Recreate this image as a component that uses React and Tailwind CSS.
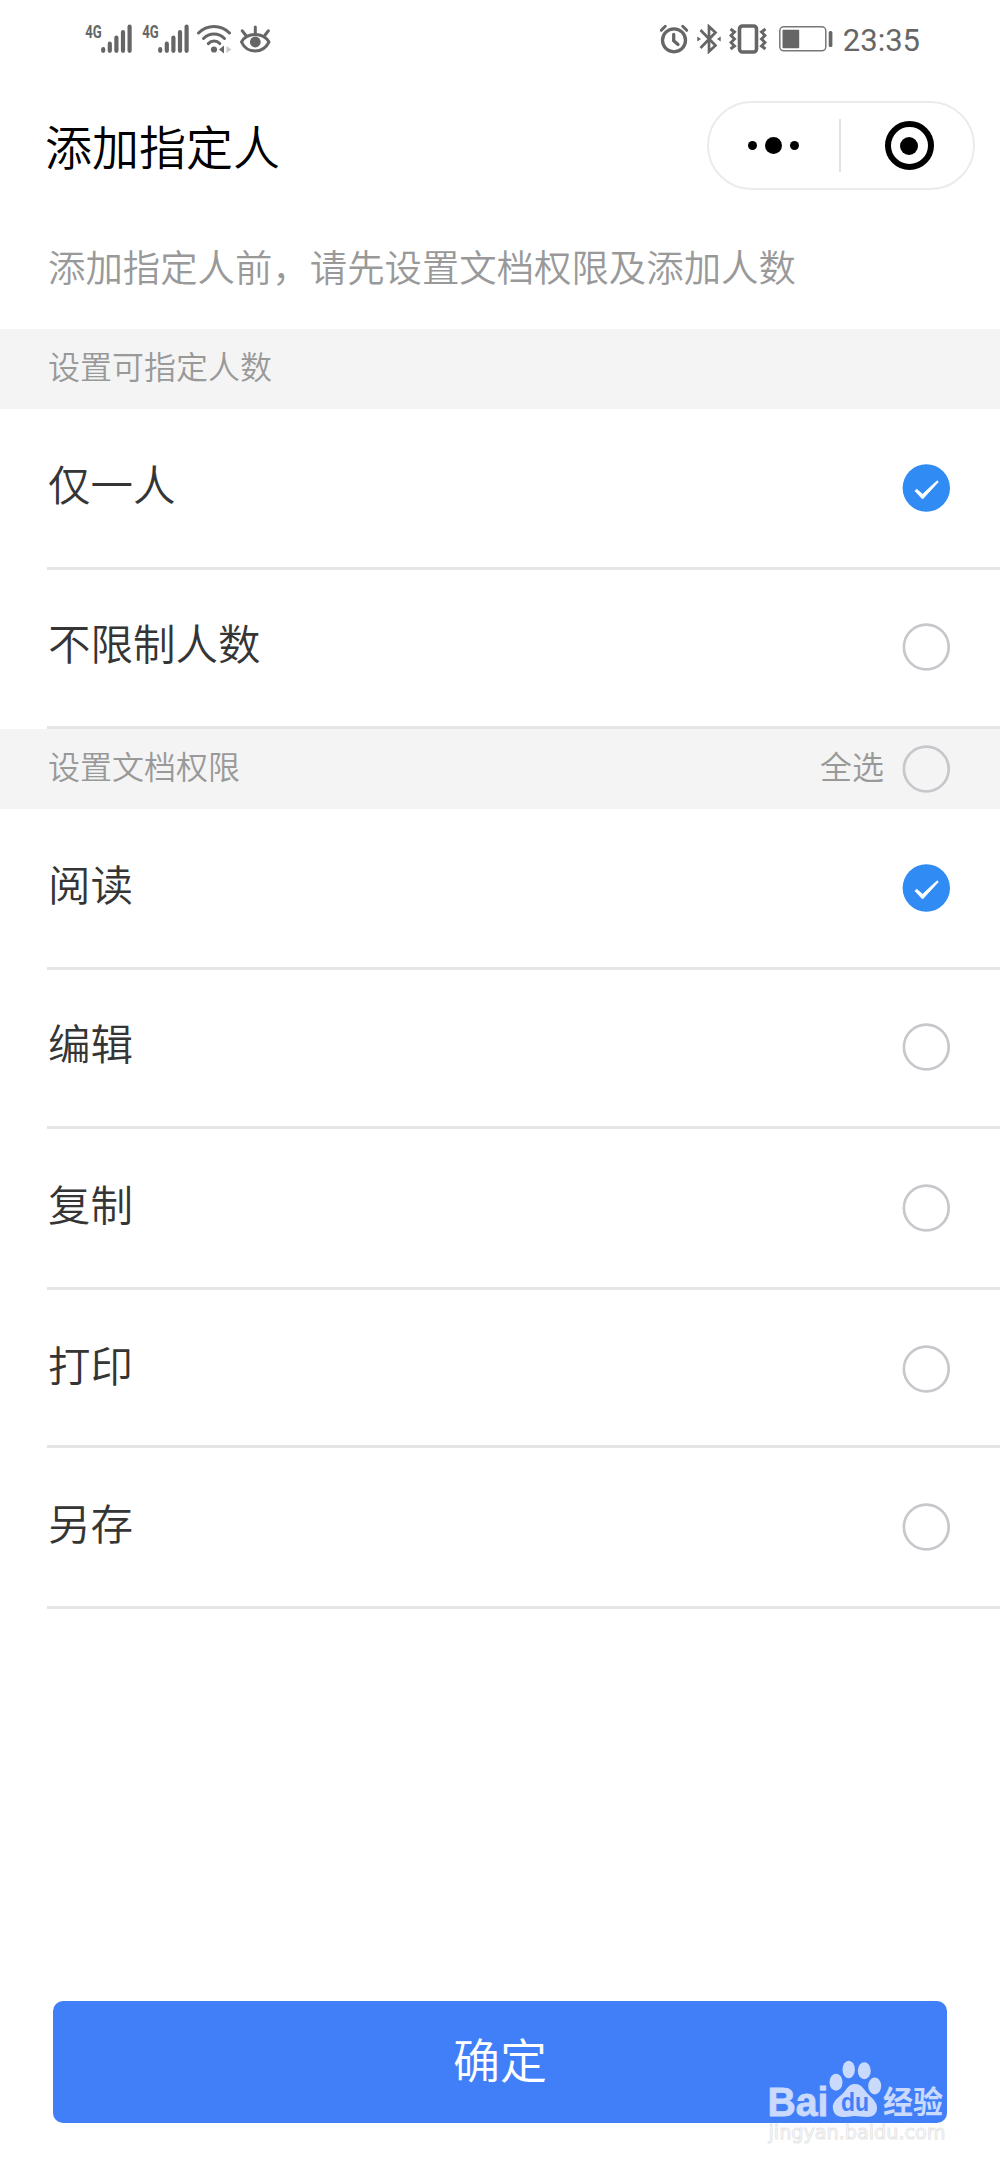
import React, { useState } from 'react';

const PEOPLE = [
  { id: 'one', label: '仅一人', size: 'h-[161px]' },
  { id: 'unlimited', label: '不限制人数', size: 'h-[159px] pb-[2px]' },
];

const PERMISSIONS = [
  { id: 'read', label: '阅读', size: 'h-[161px]' },
  { id: 'edit', label: '编辑', size: 'h-[159px] pb-[2px]' },
  { id: 'copy', label: '复制', size: 'h-[161px]' },
  { id: 'print', label: '打印', size: 'h-[158px] pt-[3px]' },
  { id: 'save', label: '另存', size: 'h-[161px]' },
];

const Signal = () => (
  <svg width="49" height="30" viewBox="0 0 49 30" fill="#666" stroke="#666" className="overflow-visible">
    <text
      x="0.3"
      y="13.6"
      fontSize="18"
      fontWeight="700"
      stroke="none"
      textLength="16.5"
      lengthAdjust="spacingAndGlyphs"
      fontFamily="Roboto, sans-serif"
    >
      4G
    </text>
    <path
      d="M18.2 25.200v1.600M24.800 19.700v7.100M31.400 13.700v13.100M38 8v18.800M44.600 2.500v24.300"
      strokeWidth="4.2"
      strokeLinecap="round"
    />
  </svg>
);

const WifiIcon = () => (
  <svg width="36" height="30" viewBox="0 0 36 30" fill="none" stroke="#666" strokeWidth="3" strokeLinecap="round">
    <path d="M1.500 9C10 .200 24 .200 32.500 9" />
    <path d="M6.500 14.500C12.500 8.500 21.500 8.500 27.500 14.500" />
    <path d="M11.300 19.600C14.500 16.200 19.700 16.200 22.800 19.600" />
    <circle cx="17" cy="25.500" r="3.100" fill="#666" stroke="none" />
    <path d="M27 21.500v8l-5-4z" fill="#666" stroke="none" />
    <path d="M29.500 22v7l5-3.500z" fill="#ccc" stroke="none" />
  </svg>
);

const EyeIcon = () => (
  <svg width="32" height="30" viewBox="0 0 32 30" fill="none" stroke="#666" strokeWidth="3" strokeLinecap="round">
    <path d="M2.500 18C8 8 24 8 30 18C24 30 8 30 2.500 18z" strokeLinejoin="round" />
    <circle cx="16.300" cy="18" r="5.400" fill="#666" stroke="none" />
    <path d="M16.300 3v6M3.300 6.800l3.200 4.200M29.300 6.800l-3.200 4.200" />
  </svg>
);

const AlarmIcon = () => (
  <svg width="30" height="30" viewBox="0 0 30 30" fill="none" stroke="#666" strokeWidth="3.3" strokeLinecap="round">
    <circle cx="15" cy="16.300" r="11.500" />
    <path d="M14.700 10.500v6.300l4.300 3.700" />
    <path d="M2.300 6.300l4-4M27.700 6.300l-4-4" strokeWidth="3" />
  </svg>
);

const BluetoothIcon = () => (
  <svg width="24" height="30" viewBox="0 0 24 30" fill="none" stroke="#666" strokeWidth="2.700">
    <path d="M3.500 6l15 15.500-6.500 6V2.500l6.500 6-15 15.500" />
    <path d="M.300 12.500l3.700 2.500-3.700 2.500zM23.700 12.500l-3.700 2.500 3.700 2.500z" fill="#666" stroke="none" />
  </svg>
);

const VibrateIcon = () => (
  <svg width="38" height="30" viewBox="0 0 38 30" fill="none" stroke="#666">
    <rect x="10.500" y="2" width="17" height="26" rx="3" strokeWidth="3.600" />
    <path d="M1.500 5l4 3-3.500 3.500 3.500 3.500-3.500 3.500 3.500 3.500-4 3" strokeWidth="2.900" />
    <path d="M36.500 5l-4 3 3.500 3.500-3.500 3.500 3.500 3.500-3.500 3.500 4 3" strokeWidth="2.900" />
  </svg>
);

const BatteryIcon = () => (
  <svg width="54" height="26" viewBox="0 0 54 26" fill="none">
    <rect x=".8" y=".8" width="46" height="24" rx="4" stroke="#777" strokeWidth="1.500" />
    <rect x="3.500" y="3.700" width="16.700" height="18.500" rx="1" fill="#666" />
    <rect x="49.700" y="5" width="3.700" height="16" rx="1.500" fill="#666" />
  </svg>
);

const StatusBar = () => (
  <div className="flex h-[78px] items-center justify-between pl-[85px] pr-[80px]">
    <div className="flex items-center">
      <Signal />
      <div className="ml-2">
        <Signal />
      </div>
      <div className="ml-1.5 flex gap-1.5">
        <WifiIcon />
        <EyeIcon />
      </div>
    </div>
    <div className="flex items-center">
      <AlarmIcon />
      <div className="ml-2">
        <BluetoothIcon />
      </div>
      <div className="ml-2">
        <VibrateIcon />
      </div>
      <div className="ml-3">
        <BatteryIcon />
      </div>
      <span className="ml-2.5 pt-0.5 font-[Roboto] text-[31px] font-normal leading-none text-[#666]">23:35</span>
    </div>
  </div>
);

const Capsule = () => (
  <div className="flex h-[89px] w-[268px] items-center rounded-full border-2 border-[#ebebeb]">
    <div className="flex flex-1 items-center justify-center gap-2 pr-0.5">
      <span className="size-[9px] rounded-full bg-black" />
      <span className="size-[17px] rounded-full bg-black" />
      <span className="size-[9px] rounded-full bg-black" />
    </div>
    <div className="h-[53px] w-0.5 bg-[#e2e2e2]" />
    <div className="flex flex-1 justify-center pl-1">
      <div className="flex size-[49px] items-center justify-center rounded-full border-[6px] border-black">
        <span className="size-[18px] rounded-full bg-black" />
      </div>
    </div>
  </div>
);

const Radio = ({ checked, onClick }) => (
  <button type="button" onClick={onClick} className="size-[48px] shrink-0">
    <svg width="48" height="48" viewBox="0 0 48 48" fill="none">
      {checked ? (
        <>
          <circle cx="24.300" cy="24" r="23.700" fill="#318bf5" />
          <path
            d="M12.900 26.900L14.600 25.200L20.600 30.300L35.200 16.800L36.300 17.900L20.600 35z"
            fill="#fff"
            stroke="#fff"
            strokeWidth="0.8"
            strokeLinejoin="round"
          />
        </>
      ) : (
        <circle cx="24.300" cy="24" r="22.400" stroke="#c8c7cc" strokeWidth="2.700" />
      )}
    </svg>
  </button>
);

const Row = ({ item, checked, onClick }) => (
  <div
    className={`ml-[47px] flex items-center justify-between border-b-[3px] border-[#e5e5e5] pl-px pr-[50px] ${item.size}`}
  >
    <span className="pb-[10px] text-[42.500px] leading-none text-[#353535]">{item.label}</span>
    <Radio checked={checked} onClick={onClick} />
  </div>
);

const SectionHeader = ({ title, children }) => (
  <div className="flex h-[80px] items-center justify-between bg-[#f4f4f4] pl-[48px] pr-[50px] text-[32px] leading-none text-[#999]">
    <span className="pb-[9px]">{title}</span>
    {children}
  </div>
);

const Watermark = () => (
  <div className="absolute left-[766px] top-[2058px]">
    <svg width="190" height="90" viewBox="0 0 190 90" className="overflow-visible">
      <g fill="#c9dafd">
        <text
          x="1.5"
          y="57.500"
          fontSize="40"
          fontWeight="700"
          stroke="#c9dafd"
          strokeWidth="0.8"
          textLength="61"
          lengthAdjust="spacingAndGlyphs"
          fontFamily="Liberation Sans, sans-serif"
        >
          Bai
        </text>
        <ellipse cx="70" cy="24.300" rx="6.500" ry="8.500" />
        <ellipse cx="82.700" cy="11.500" rx="6.200" ry="8.800" />
        <ellipse cx="98.300" cy="12.700" rx="6.500" ry="8.500" />
        <ellipse cx="108.700" cy="28" rx="6.500" ry="8.500" />
        <path d="M89 26c-8 0-9 8-15 12-5 4-8 8-7 13 1 6 5 8 11 8 5 0 7-1 11-1s7 1 12 1c6 0 10-3 10-9 0-5-3-8-7-12-6-5-7-12-15-12z" />
        <text
          x="117"
          y="55"
          fontSize="31"
          fontWeight="700"
          textLength="60"
          lengthAdjust="spacingAndGlyphs"
          fontFamily="Noto Sans CJK SC, sans-serif"
        >
          经验
        </text>
      </g>
      <text
        x="75"
        y="53"
        fontSize="26"
        fontWeight="700"
        fill="#417ff9"
        textLength="28"
        lengthAdjust="spacingAndGlyphs"
        fontFamily="Liberation Sans, sans-serif"
      >
        du
      </text>
      <text
        x="2.5"
        y="81"
        fontSize="20"
        fontWeight="400"
        fill="#fff"
        stroke="#e6e6e6"
        strokeWidth="1"
        textLength="177"
        lengthAdjust="spacingAndGlyphs"
        fontFamily="DejaVu Sans, sans-serif"
      >
        jingyan.baidu.com
      </text>
    </svg>
  </div>
);

const App = () => {
  const [people, setPeople] = useState('one');
  const [permissions, setPermissions] = useState(['read']);

  const allSelected = permissions.length === PERMISSIONS.length;

  const togglePermission = (id) => {
    setPermissions((prev) => (prev.includes(id) ? prev.filter((p) => p !== id) : [...prev, id]));
  };

  const toggleAll = () => {
    setPermissions(allSelected ? [] : PERMISSIONS.map((p) => p.id));
  };

  return (
    <div className="relative flex h-[2167px] w-[1000px] flex-col bg-white font-['Noto_Sans_CJK_SC',sans-serif] font-[350]">
      <StatusBar />

      <header className="flex h-[134px] items-center justify-between pl-[45px] pr-[25px] pt-px">
        <h1 className="pb-[3px] text-[47px] font-[350] leading-none text-black">添加指定人</h1>
        <Capsule />
      </header>

      <p className="h-[117px] pl-[48px] pt-[36px] text-[37.400px] leading-none text-[#999]">
        添加指定人前，请先设置文档权限及添加人数
      </p>

      <SectionHeader title="设置可指定人数" />
      {PEOPLE.map((item) => (
        <Row key={item.id} item={item} checked={people === item.id} onClick={() => setPeople(item.id)} />
      ))}

      <SectionHeader title="设置文档权限">
        <div className="flex items-center gap-[18px]">
          <span className="pb-[9px]">全选</span>
          <Radio checked={allSelected} onClick={toggleAll} />
        </div>
      </SectionHeader>
      {PERMISSIONS.map((item) => (
        <Row
          key={item.id}
          item={item}
          checked={permissions.includes(item.id)}
          onClick={() => togglePermission(item.id)}
        />
      ))}

      <button
        type="button"
        className="mx-[53px] mb-[44px] mt-auto h-[122px] rounded-[10px] bg-[#417ff9] pb-[9px] text-[47px] leading-none text-white"
      >
        确定
      </button>

      <Watermark />
    </div>
  );
};

export default App;
